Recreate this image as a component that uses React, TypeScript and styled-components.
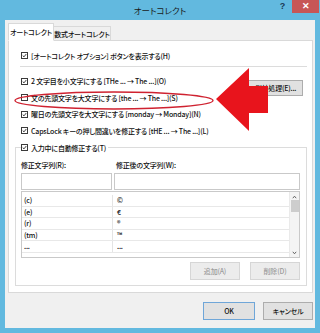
import React from 'react';
import styled, { createGlobalStyle } from 'styled-components';

const GlobalStyle = createGlobalStyle`
  html, body {
    margin: 0;
    padding: 0;
    width: 320px;
    height: 333px;
    overflow: hidden;
    background: #62b9df;
  }
  * {
    box-sizing: border-box;
  }
`;

const font = `'Noto Sans CJK JP', 'Noto Sans', sans-serif`;

const Window = styled.div`
  position: relative;
  width: 320px;
  height: 333px;
  display: flex;
  flex-direction: column;
  background: #62b9df;
  padding: 0 5px 5px 5px;
  font-family: ${font};
  font-size: 7px;
  font-weight: 500;
  letter-spacing: -0.2px;
  font-feature-settings: 'palt';
  color: #111;
`;

const TitleBar = styled.div`
  height: 20px;
  display: grid;
  grid-template-columns: 1fr auto 1fr;
  align-items: start;
`;

const Title = styled.div`
  grid-column: 2;
  font-size: 8.5px;
  font-weight: 400;
  letter-spacing: 0;
  line-height: 20px;
  color: #1a1a1a;
`;

const TitleControls = styled.div`
  grid-column: 3;
  display: flex;
  justify-content: flex-end;
  align-items: flex-start;
  gap: 7px;
  margin-right: -4px;
`;

const HelpMark = styled.span`
  font-family: 'Liberation Sans', sans-serif;
  font-weight: bold;
  font-size: 9px;
  line-height: 12px;
  color: #1d3a55;
`;

const CloseButton = styled.div`
  width: 27px;
  height: 13px;
  background: #c75656;
  color: #fff;
  font-family: 'Liberation Sans', sans-serif;
  font-weight: bold;
  font-size: 9px;
  line-height: 13px;
  text-align: center;
`;

const Body = styled.div`
  flex: 1;
  background: #f0f0f0;
  display: flex;
  flex-direction: column;
  padding: 3px 2px 7px 3px;
`;

const TabRow = styled.div`
  display: flex;
  align-items: flex-end;
  height: 18px;
  margin-bottom: -1px;
  position: relative;
  z-index: 1;
`;

const Tab = styled.div<{ active?: boolean; w: number }>`
  width: ${({ w }) => w}px;
  height: ${({ active }) => (active ? 18 : 15)}px;
  background: ${({ active }) => (active ? '#fff' : '#f0f0f0')};
  border: 1px solid #d9d9d9;
  border-bottom: ${({ active }) => (active ? '1px solid #fff' : '1px solid #d9d9d9')};
  border-left: ${({ active }) => (active ? '1px solid #d9d9d9' : 'none')};
  line-height: ${({ active }) => (active ? 17 : 14)}px;
  text-align: center;
  white-space: nowrap;
`;

const Panel = styled.div`
  height: 253px;
  background: #fff;
  border: 1px solid #d9d9d9;
  padding: 6px 5px 5px 6px;
  display: flex;
  flex-direction: column;
`;

const Row = styled.label<{ h?: number }>`
  display: flex;
  align-items: center;
  gap: 3px;
  height: ${({ h }) => h ?? 16.5}px;
  margin-left: 6px;
  white-space: nowrap;
`;

const Box = styled.span`
  width: 7px;
  height: 7px;
  border: 1px solid #3a3a3a;
  background: #fff;
  display: inline-flex;
  align-items: center;
  justify-content: center;
  flex: none;
`;

const Separator = styled.div`
  height: 1px;
  background: #dcdcdc;
  margin: 2px 0 6px 5px;
`;

const OptionBlock = styled.div`
  display: flex;
  align-items: flex-start;
`;

const OptionRows = styled.div`
  flex: 1;
  display: flex;
  flex-direction: column;
`;

const Button = styled.div<{ primary?: boolean; disabled?: boolean; w: number; h?: number }>`
  width: ${({ w }) => w}px;
  height: ${({ h }) => h ?? 18}px;
  background: ${({ disabled }) => (disabled ? '#ececec' : '#e1e1e1')};
  border: 1px solid
    ${({ primary, disabled }) => (primary ? '#6fa6d8' : disabled ? '#d6d6d6' : '#adadad')};
  color: ${({ disabled }) => (disabled ? '#9c9c9c' : '#111')};
  display: flex;
  align-items: center;
  justify-content: center;
  white-space: nowrap;
  flex: none;
`;

const ExceptionButton = styled(Button)`
  margin: 7px 4px 0 0;
`;

const Group = styled.fieldset`
  margin: 0;
  border: 1px solid #dcdcdc;
  padding: 3px 6px 5px 5px;
  min-width: 0;
  display: flex;
  flex-direction: column;
`;

const Legend = styled.legend`
  padding: 0 2px 0 0;
  margin: 0;
  display: flex;
  align-items: center;
  gap: 3px;
  height: 17px;
  white-space: nowrap;
`;

const Fields = styled.div`
  display: grid;
  grid-template-columns: 91px 1fr;
  column-gap: 2px;
`;

const FieldLabel = styled.div<{ inset?: number }>`
  height: 13px;
  line-height: 13px;
  padding-left: ${({ inset }) => inset ?? 0}px;
  margin-bottom: 1px;
`;

const Input = styled.div`
  height: 17px;
  background: #fff;
  border: 1px solid #c9c9c9;
`;

const List = styled.div`
  margin-top: 1px;
  height: 67px;
  border: 1px solid #c9c9c9;
  display: grid;
  grid-template-columns: 1fr 10px;
  overflow: hidden;
`;

const ListRows = styled.div`
  padding-top: 3px;
`;

const ListRow = styled.div`
  display: grid;
  grid-template-columns: 90px 1fr;
  height: 11.6px;
  border-bottom: 1px solid #e8e8e8;
  line-height: 11px;
`;

const Cell = styled.div<{ divider?: boolean }>`
  padding-left: ${({ divider }) => (divider ? 4 : 2)}px;
  border-left: ${({ divider }) => (divider ? '1px solid #e4e4e4' : 'none')};
  white-space: nowrap;
  overflow: hidden;
`;

const ScrollBar = styled.div`
  background: #f4f4f4;
  border-left: 1px solid #eaeaea;
  display: flex;
  flex-direction: column;
  align-items: center;
  justify-content: space-between;
  padding: 3px 0 2px;
`;

const ScrollThumb = styled.div`
  width: 8px;
  height: 12px;
  background: #cdcdcd;
  margin-top: 1px;
  margin-bottom: auto;
`;

const ButtonRow = styled.div<{ gap: number; top: number }>`
  display: flex;
  justify-content: flex-end;
  gap: ${({ gap }) => gap}px;
  margin-top: ${({ top }) => top}px;
`;

const Overlay = styled.svg`
  position: absolute;
  left: 0;
  top: 0;
  pointer-events: none;
`;

const Check = ({ on }: { on?: boolean }) => (
  <Box>
    {on && (
      <svg width="7" height="7" viewBox="0 0 7 7">
        <path d="M1 3.6 L2.8 5.4 L6 1.4" fill="none" stroke="#222" strokeWidth="1.2" />
      </svg>
    )}
  </Box>
);

const Arrow = ({ d }: { d: string }) => (
  <svg width="5" height="4" viewBox="0 0 5 4">
    <path d={d} fill="none" stroke="#555" strokeWidth="0.9" />
  </svg>
);

const entries = [
  ['(c)', '©'],
  ['(e)', '€'],
  ['(r)', '®'],
  ['(tm)', '™'],
  ['...', '...'],
];

export default function App() {
  return (
    <>
      <GlobalStyle />
      <Window>
        <TitleBar>
          <Title>オートコレクト</Title>
          <TitleControls>
            <HelpMark>?</HelpMark>
            <CloseButton>✕</CloseButton>
          </TitleControls>
        </TitleBar>
        <Body>
          <TabRow>
            <Tab active w={46}>
              オートコレクト
            </Tab>
            <Tab w={57}>数式オートコレクト</Tab>
          </TabRow>
          <Panel>
            <Row h={17}>
              <Check on />
              [オートコレクト オプション] ボタンを表示する(H)
            </Row>
            <Separator />
            <OptionBlock>
              <OptionRows>
                <Row>
                  <Check on />2 文字目を小文字にする [THe ... → The ...](O)
                </Row>
                <Row>
                  <Check />
                  文の先頭文字を大文字にする [the ... → The ...](S)
                </Row>
                <Row>
                  <Check on />
                  曜日の先頭文字を大文字にする [monday → Monday](N)
                </Row>
                <Row>
                  <Check on />
                  CapsLock キーの押し間違いを修正する [tHE ... → The ...](L)
                </Row>
              </OptionRows>
              <ExceptionButton w={55} h={16}>
                例外処理(E)...
              </ExceptionButton>
            </OptionBlock>
            <Group>
              <Legend>
                <Check on />
                入力中に自動修正する(T)
              </Legend>
              <Fields>
                <FieldLabel>修正文字列(R):</FieldLabel>
                <FieldLabel inset={2}>修正後の文字列(W):</FieldLabel>
                <Input />
                <Input />
              </Fields>
              <List>
                <ListRows>
                  {entries.map(([from, to]) => (
                    <ListRow key={from}>
                      <Cell>{from}</Cell>
                      <Cell divider>{to}</Cell>
                    </ListRow>
                  ))}
                </ListRows>
                <ScrollBar>
                  <Arrow d="M0.8 3.2 L2.5 1.2 L4.2 3.2" />
                  <ScrollThumb />
                  <Arrow d="M0.8 0.8 L2.5 2.8 L4.2 0.8" />
                </ScrollBar>
              </List>
              <ButtonRow gap={10} top={4}>
                <Button w={50} disabled>
                  追加(A)
                </Button>
                <Button w={50} disabled>
                  削除(D)
                </Button>
              </ButtonRow>
            </Group>
          </Panel>
          <ButtonRow gap={8} top={9}>
            <Button w={52} primary>
              OK
            </Button>
            <Button w={50}>キャンセル</Button>
          </ButtonRow>
        </Body>
        {/* red annotation drawn over the dialog */}
        <Overlay width="320" height="333" viewBox="0 0 320 333">
          <ellipse cx="114" cy="100.5" rx="99" ry="8.5" fill="none" stroke="#cf2230" strokeWidth="1.4" />
          <polygon
            points="216,99 249,68 249,86 268,86 268,113 249,113 249,131"
            fill="#e8141c"
          />
        </Overlay>
      </Window>
    </>
  );
}
